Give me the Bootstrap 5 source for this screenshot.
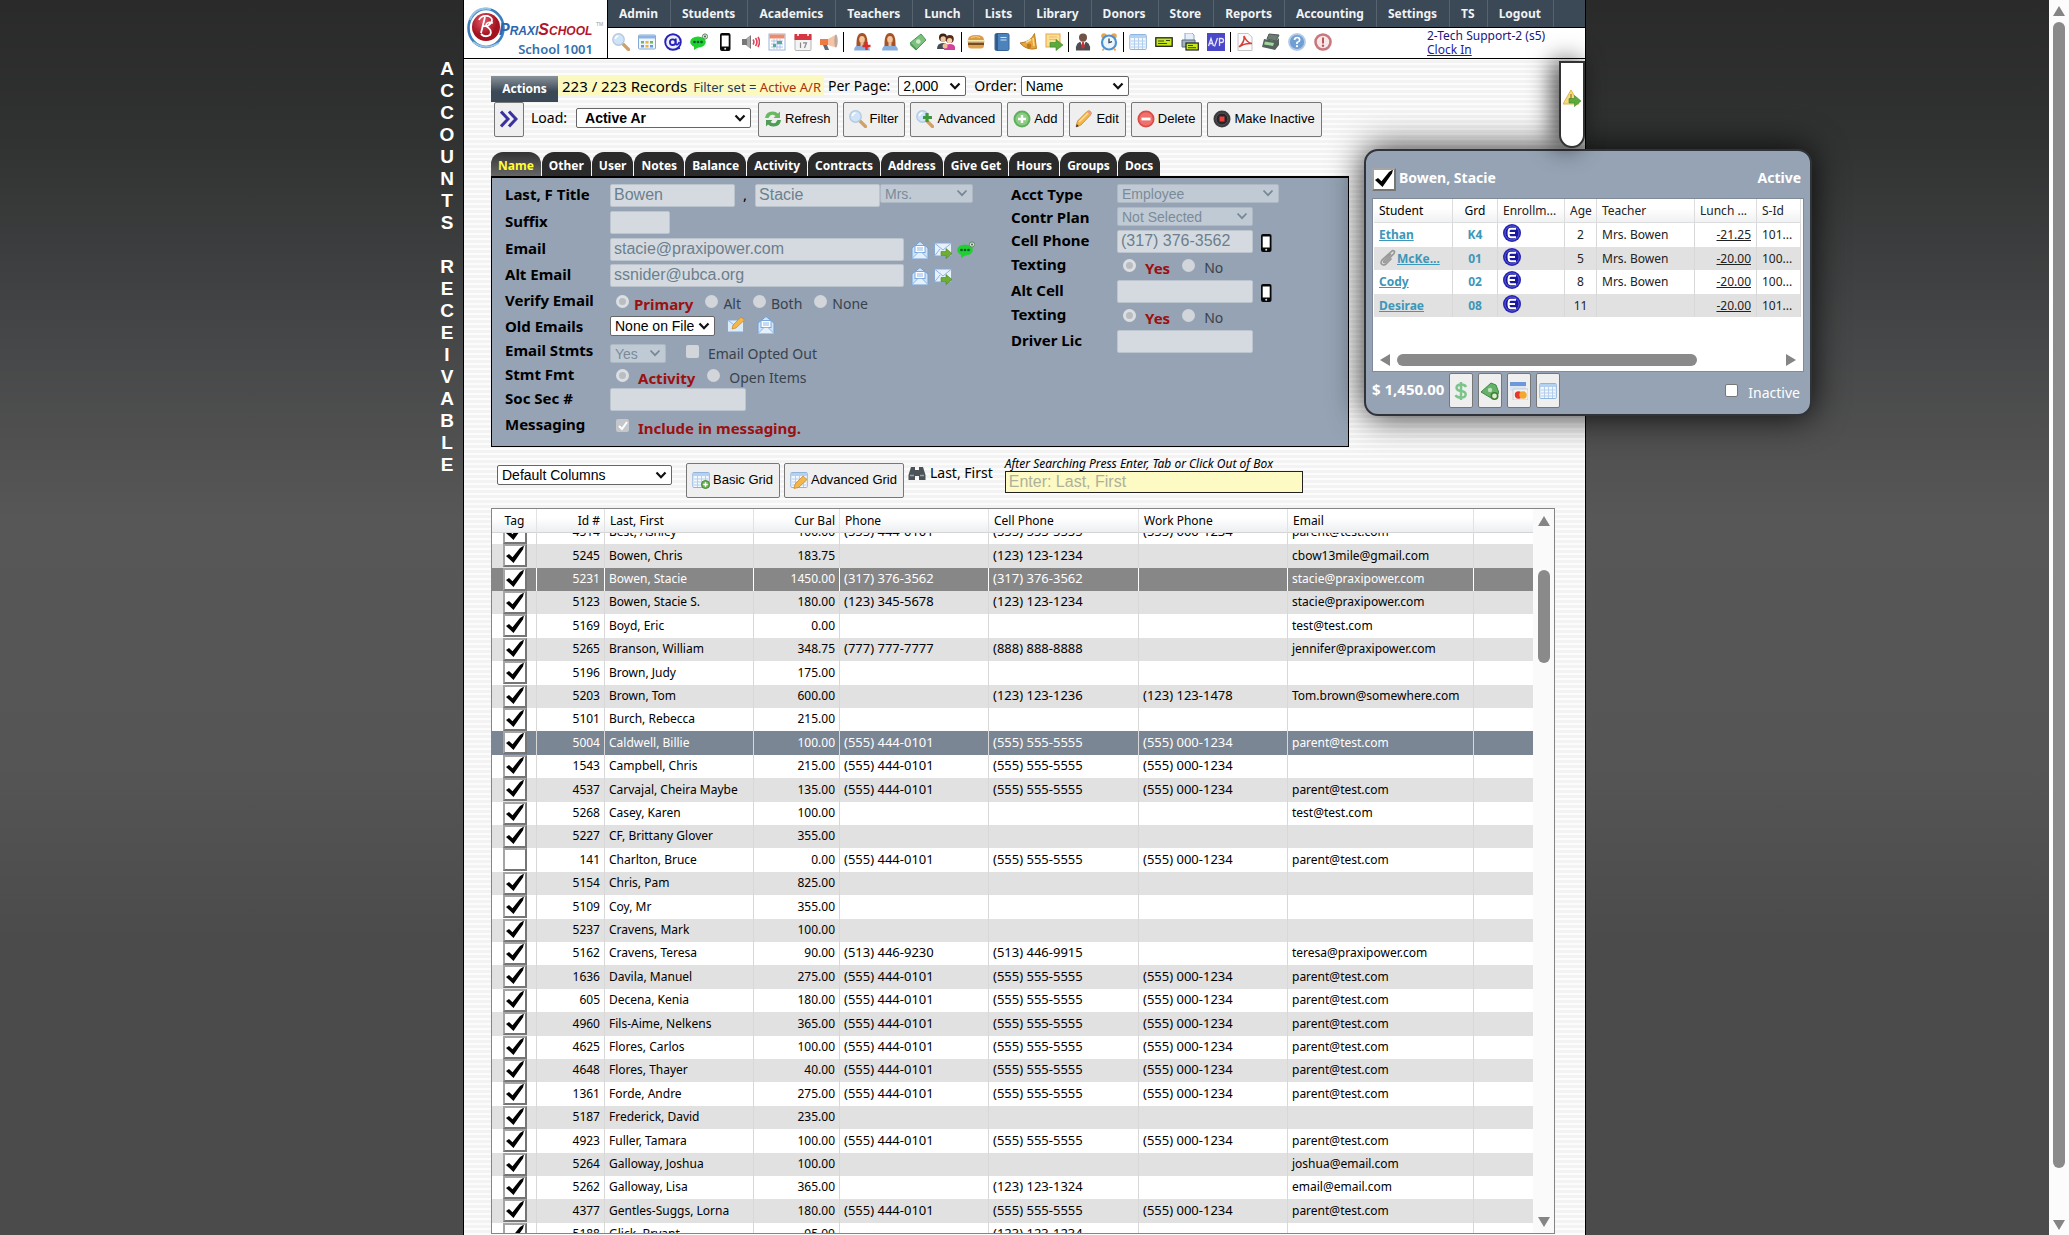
<!DOCTYPE html>
<html lang="en">
<head>
<meta charset="utf-8">
<title>PraxiSchool - Accounts Receivable</title>
<meta name="viewport" content="width=device-width, initial-scale=1">
<link rel="stylesheet" href="https://cdn.jsdelivr.net/npm/bootstrap@5.3.0/dist/css/bootstrap.min.css">
<style>
:root{--ui:"Noto Sans","Open Sans",sans-serif;--ctl:"Liberation Sans",Arial,sans-serif;--steel:#95a3b4}
body{font:12px/16px var(--ui);color:#000;background:linear-gradient(#2a2a2a 0,#303131 11%,#454647 27%,#575757 42%,#555 62%,#4b4b4b 76%,#4b4b4b 100%)}
svg.ic{width:18px;height:18px;flex:none;display:block}
.side{flex:1 1 0}
.side-title{color:#fff;font:bold 19px/22px var(--ctl);padding:58px 8px 0 0}
.side-title span{height:22px;width:16px;text-align:center;display:block}
.sheet{flex:0 1 1123px;min-width:0;border:1px solid #000;border-width:0 1px;background:repeating-linear-gradient(#f3f3f3 0 3px,#fcfcfc 3px 5px)}
/* header */
.head{height:60px;background:#fff;border-bottom:1px solid #000}
.logo{width:144px;border-right:1px solid #000;flex:none}
.school{font:600 13px/16px var(--ui);color:#3470ae;right:14px;top:41px}
.menu{height:28px;background:#3b4855;border-bottom:1px solid #000}
.menu a{font-weight:700;line-height:27px;color:#f0f2f4;text-decoration:none;padding:0 12px 0 11px;border-right:1px solid #56636f}
.tools{padding-bottom:2px}
.tools .bar{width:1px;height:20px;background:#000;margin:0 1px}
.tools .bar:nth-of-type(1){margin-right:4px}
.tools button{border:0;background:none;padding:0 4px}
.tools .wide button{padding:0 5px}
.user{color:#17177c;line-height:14px;width:158px;flex:none}
.user a{color:#1a1aa6;text-decoration:underline}
/* content */
.content{padding:17px 30px 1px 27px;min-height:0}
.actions{width:67px;height:26px;border:0;color:#fff;font-weight:700;background:linear-gradient(#8a939b,#3b4855 60%);flex:none;padding:0}
.found{background:#fbf8c0;height:20px;line-height:20px;padding:0 3px 0 4px}
.found b{font-weight:400;font-size:15px}
.found span{color:#1b3f63;font-size:13px;margin-left:6px}
.found em{font-style:normal;color:#a8330c}
.t14{font-size:14px;line-height:20px}
.t15{font-size:15px;line-height:20px}
.pick{appearance:none;border:1px solid #666;border-radius:2px;height:20px;font:14px/18px var(--ctl);color:#000;padding:0 20px 0 4px;
 background:#fff url("data:image/svg+xml,%3Csvg xmlns='http://www.w3.org/2000/svg' width='12' height='8'%3E%3Cpath d='M1.5 1.5 6 6.2l4.500-4.700' fill='none' stroke='%23111' stroke-width='2.200'/%3E%3C/svg%3E") no-repeat right 4px center}
.pick:disabled{opacity:1;height:19px;color:#7b8a99;border-color:#aeb9c4;background-color:#c0cad4;
 background-image:url("data:image/svg+xml,%3Csvg xmlns='http://www.w3.org/2000/svg' width='12' height='8'%3E%3Cpath d='M1.5 1.5 6 6.2l4.500-4.700' fill='none' stroke='%23788796' stroke-width='1.800'/%3E%3C/svg%3E")}
.act{height:35px;border:1px solid #777;border-radius:2px;background:#efefef;font:13px/16px var(--ctl);color:#000;padding:0 6px 0 5px;display:flex;align-items:center;gap:3px;white-space:nowrap}
.act:hover{background:#e4e4e4}
.w30{width:30px;justify-content:center}
.w24{width:24px;justify-content:center;padding:0}
.cmds{gap:5px;padding-left:3px}
.loadset{gap:9px;padding:0 2px 2px}
/* tabs */
.tabs{margin-top:15px}
.tabs a{height:24px;line-height:27px;padding:0 7px;font-weight:700;color:#fff;text-decoration:none;background:#2b2b2b;border-radius:12px 12px 0 0;margin-right:1px}
.tabs a.on{color:#ff3;background:linear-gradient(#333,#666)}
.panel{background:var(--steel);border:1px solid #000;border-top-width:2px;width:858px;height:271px;padding:6px 13px}
.colL{width:506px}
.ln{display:flex;height:26px;align-items:flex-start}
.ln.s24{height:24px}.ln.s23{height:23px}.ln.s27{height:27px}
.ln>.nm{width:105px;font-size:15px;font-weight:700;line-height:20px;flex:none}
.colR .ln>.nm{width:106px}
.box{appearance:none;border:1px solid #bcc5ce;border-radius:2px;background:#d5dae0;height:23px;font:16px/21px var(--ctl);color:#6b7f8d;padding:0 3px}
.w60{width:60px}.w125{width:125px}.w136{width:136px}.w294{width:294px}.w93{width:93px}.w105{width:105px}.w56{width:56px}.w162{width:162px}.w175{width:175px}.w108{width:108px}.w68{width:68px}
.mails{display:flex;gap:5px;padding:3px 0 0 7px}
.opt{display:flex;font-size:14px;line-height:20px;color:#39424c}
.opt input{appearance:none;width:13px;height:13px;border-radius:50%;background:#d2d5d9;margin:5px 5px 0 0;flex:none}
.opt input[type=radio]:checked{border:3px solid #dcdfe2;background:#b9bcc1}
.opt input[type=checkbox]{border-radius:2px}
.opt input[type=checkbox]:checked{background:#c3c7cb url("data:image/svg+xml,%3Csvg xmlns='http://www.w3.org/2000/svg' width='13' height='13'%3E%3Cpath d='M3 7l3 3 5-7' fill='none' stroke='%23fff' stroke-width='2'/%3E%3C/svg%3E")}
.opt label{padding-top:4px}
.opt .hot{color:#9c1010;font-weight:700;font-size:15px}
.opts{display:flex;padding-left:6px;gap:12px}
.opt.far input{margin-right:9px}
.finder{margin-top:8px;padding-left:6px}
.finder .act,.finder label{margin-top:8px}
.finder .pick{margin:10px 14px 0 0}
.hint{font-style:italic;line-height:15px;padding-top:1px}
.seek{appearance:none;width:298px;height:22px;border:1px solid #222;background:#fdfac4;font:16px/20px var(--ctl);padding:0 3px;display:block}
.seek::placeholder{color:#aeb09c;opacity:1}
/* grid */
.gridbox{border:1px solid #858585;background:#fff;margin-top:10px;min-height:0}
.view{overflow:hidden;min-height:0;min-width:0}
.recs{width:100%;table-layout:fixed;border-collapse:separate;border-spacing:0;white-space:nowrap}
.recs th{position:sticky;top:0;z-index:1;height:24px;font-weight:400;padding:2px 5px 0;background:linear-gradient(#fff 40%,#eceef0);border-bottom:1px solid #d4d4d4;border-right:1px solid #e2e2e2}
.recs td{height:23px;padding:0 5px 0 4px;line-height:20px;border-right:1px solid #d8d8d8;overflow:hidden}
.recs .tall td{height:24px}
.recs td:last-child,.recs th:last-child{border-right:0}
.recs tbody tr:nth-child(even) td{background:#e1e1e1}
.recs tbody tr.cur td{background:#878787;color:#fff;border-color:#fff}
.recs tbody tr.over td{background:#7b8694;color:#fff}
.recs .num{text-align:right;padding-right:4px}
.recs .tel{font-size:13px;padding-bottom:2px}
.recs .tick{text-align:center;padding-left:1px;padding-right:0}
.tag{appearance:none;display:block;width:24px;height:23px;margin:0 auto;border:2px solid;border-color:#a5a5a5 #757575 #757575 #a5a5a5;background:#fff}
.tag:checked{background:#fff url("data:image/svg+xml,%3Csvg xmlns='http://www.w3.org/2000/svg' viewBox='0 0 20 19'%3E%3Cpath d='M1 10l3-2 3.500 3.200L15 2l4-2.500-1 4L8.500 17z'/%3E%3C/svg%3E") center/100% 100%}
.vbar{width:21px;background:#fafafa;flex:none;padding:7px 0 6px}
.vbar .thumb{height:93px;margin:44px 0 auto}
.arr{width:0;height:0;border:6px solid transparent}
.arr.up{border-top:0;border-bottom:10px solid #858585}
.arr.dn{border-bottom:0;border-top:10px solid #858585}
.arr.lt{border-left:0;border-right:10px solid #858585}
.arr.rt{border-right:0;border-left:10px solid #858585}
.thumb{background:#8a8a8a;border-radius:6px;width:12px}
.pagebar{width:20px;background:#fcfcfc;flex:none;padding:6px 0 5px}
.pagebar .thumb{margin:6px 0 52px}
/* overlays */
.pull{right:0;top:61px;width:26px;height:87px;background:#fff;border:2px solid #333;border-radius:0 0 13px 13px;box-shadow:-6px 0 24px rgba(0,0,0,.75);padding:0 0 14px 2px;z-index:3}
.cardx{left:900px;top:149px;width:448px;height:267px;background:var(--steel);border:2px solid #303337;border-radius:14px;box-shadow:0 0 34px rgba(0,0,0,.85);padding:0 6px;z-index:2;color:#fff}
.cardx .top{height:47px;padding:17px 3px 0 0;font-size:14px;font-weight:700;line-height:20px;gap:3px}
.cardx .foot{gap:5px;padding-top:1px}
.kids{background:#fff;height:174px;border:1px solid #7f8b98;padding:0 2px 0 1px;color:#222}
.kids table{width:100%;table-layout:fixed;border-collapse:separate;border-spacing:0;white-space:nowrap}
.kids th{height:24px;font-weight:400;padding:0 5px;border-right:1px solid #ddd;border-bottom:1px solid #ddd;background:linear-gradient(#fff 40%,#f0f1f2)}
.kids td{height:23px;padding:0 5px;border-right:1px solid #d8d8d8;line-height:20px;overflow:hidden}
.kids .tall td{height:24px}
.kids tr:nth-child(even) td{background:#e1e1e1}
.kids a{color:#3c97b8;font-weight:700;text-decoration:underline}
.kids .grd{color:#3c97b8;font-weight:700;text-align:center}
.kids .lun{text-align:right;text-decoration:underline}
.kids td>svg{margin-bottom:4px}
.kids .hbar{margin-top:37px;padding:0 5px 0 6px}
.hbar .thumb{height:12px;width:300px;margin:0 auto 0 7px}
.chk0{appearance:none;width:13px;height:13px;background:#fff;border:1px solid #777;border-radius:2px;margin:0 10px 0 0}
</style>
</head>
<body class="vh-100 overflow-hidden d-flex">
<svg width="0" height="0" class="position-absolute" aria-hidden="true">
<symbol id="mag" viewBox="0 0 18 18"><path d="M10.500 10.500l6 6" stroke="#cfa06a" stroke-width="3.200" stroke-linecap="round"/><circle cx="6.500" cy="6.500" r="5.700" fill="#cfe4f8" stroke="#b3cae2" stroke-width="1.400"/><path d="M3.500 6a3 3 0 013-3" stroke="#fff" stroke-width="1.500" fill="none"/></symbol>
<symbol id="cal4" viewBox="0 0 18 18"><rect x=".5" y="2" width="17" height="14" rx="1" fill="#eef5fc" stroke="#86a9d4"/><path d="M1 2.500h16v3H1z" fill="#8db4e2"/><path d="M3 8h3v2.500H3zM12 8h3v2.500h-3z" fill="#79b366"/><path d="M7.500 8h3v2.500h-3zM7.500 12h3v2.500h-3z" fill="#f0b040"/><path d="M3 12h3v2.500H3zM12 12h3v2.500h-3z" fill="#6a9bd8"/></symbol>
<symbol id="at" viewBox="0 0 18 18"><circle cx="9" cy="9" r="7.800" fill="#eef" stroke="#2624b8" stroke-width="1.900"/><circle cx="8.700" cy="9.200" r="2.800" fill="none" stroke="#2624b8" stroke-width="1.800"/><path d="M11.800 5.500v5c0 2 3 1.500 3.500-1.500M12 16l4-1" fill="none" stroke="#2624b8" stroke-width="1.700"/></symbol>
<symbol id="sms" viewBox="0 0 18 18"><ellipse cx="8" cy="9" rx="7.800" ry="5.500" fill="#1fd02f"/><path d="M4 13l0 4 5-3z" fill="#1fd02f"/><g fill="#053"><circle cx="4.500" cy="9" r="1.300"/><circle cx="8" cy="9" r="1.300"/><circle cx="11.500" cy="9" r="1.300"/></g><circle cx="15" cy="3.500" r="2.600" fill="#dfeadf" stroke="#5a8a5a"/><circle cx="15" cy="3.500" r=".9" fill="#444"/></symbol>
<symbol id="cell" viewBox="0 0 18 18"><rect x="4" y="0" width="10.500" height="18" rx="2" fill="#080808"/><path d="M5.700 2.500h7v11h-7z" fill="#fff"/><circle cx="9.200" cy="15.800" r="1" fill="#ddd"/></symbol>
<symbol id="spk" viewBox="0 0 18 18"><path d="M0 6h4l5-4v14l-5-4H0z" fill="#777"/><path d="M5 5l3-2v12l-3-2z" fill="#aaa"/><path d="M11 6.500q1.800 2.500 0 5M13.500 5q3 4 0 8M16 4q3 5 0 10" stroke="#e2425a" stroke-width="1.600" fill="none"/></symbol>
<symbol id="calr" viewBox="0 0 18 18"><rect x="1" y="1" width="16" height="16" fill="#fff" stroke="#9ab6dc"/><path d="M1.500 1.500h15v4h-15z" fill="#f08a68"/><path d="M3 8h12M3 11h12M3 14h12M6 6v10M9 6v10M12 6v10" stroke="#a9c4e6"/><path d="M9 8h5v3h-5zM5 11h3v3H5z" fill="#5fa79a"/></symbol>
<symbol id="cal17" viewBox="0 0 18 18"><rect x="1" y="1.500" width="16" height="16" rx="1" fill="#f4f4f4" stroke="#b5b5b5"/><path d="M.5 1h17v6H.5z" fill="#d63642"/><path d="M4 0v3M14 0v3" stroke="#fff" stroke-width="1.500"/><path d="M6.500 9.500V15M9 9.800h3.500L10.500 15" stroke="#888" stroke-width="1.200" fill="none"/></symbol>
<symbol id="horn" viewBox="0 0 18 18"><path d="M0 6l9 0v6H0z" fill="#ee7a44"/><path d="M8 6l8-4.500v13L8 12z" fill="#f6c3a4"/><ellipse cx="16" cy="8" rx="1.700" ry="6.500" fill="#b9a9a0"/><path d="M3 12h4l2 5H5z" fill="#5b6f85"/></symbol>
<symbol id="wom" viewBox="0 0 18 18"><path d="M1 17.500q0-6 8-6t8 6z" fill="#88aede"/><path d="M3.500 13Q3 0 9 0t5.500 13z" fill="#a3532a"/><ellipse cx="9" cy="6.500" rx="2.800" ry="3.600" fill="#f3c69c"/><path d="M7.500 10h3v3h-3z" fill="#eebc90"/></symbol>
<symbol id="womp" viewBox="0 0 18 18"><use href="#wom"/><path d="M13.500 9v8M9.500 13h8" stroke="#e02a28" stroke-width="2.400"/></symbol>
<symbol id="cash" viewBox="0 0 18 18"><path d="M1 10L12 1l5 6L7 17z" fill="#7cc07e" stroke="#4e9a55"/><path d="M1 12l1-2 6 6-1 1.500z" fill="#4e9a55"/><circle cx="9.300" cy="8.500" r="2.300" fill="#cfeacb"/></symbol>
<symbol id="ppl" viewBox="0 0 18 18"><circle cx="6" cy="4.500" r="4" fill="#3b2416"/><circle cx="6.200" cy="6" r="2.700" fill="#f1c59d"/><path d="M0 16q0-6 6-6t5 6z" fill="#454b57"/><circle cx="12.800" cy="6" r="4" fill="#5a2c17"/><circle cx="12.600" cy="7.500" r="2.600" fill="#f6cfac"/><path d="M7 17q0-6 6-6t5 6z" fill="#d5409c"/><circle cx="8" cy="13" r="2.500" fill="#efbd92"/></symbol>
<symbol id="bun" viewBox="0 0 18 18"><path d="M1 7q0-5 8-5t8 5z" fill="#dd9a42"/><path d="M.5 7.500h17v2H.5z" fill="#e7cf56"/><path d="M1 9.500h16v3H1z" fill="#7a4b1f"/><path d="M1 12.500h16q0 3-3 3H4q-3 0-3-3z" fill="#dfa24e"/><path d="M4 4.500q5-2 9 0" stroke="#f3cf8e" fill="none"/></symbol>
<symbol id="book" viewBox="0 0 18 18"><rect x="2" y=".5" width="14" height="17" rx="1.500" fill="#4c83bd" stroke="#366494"/><path d="M2.500 1h2.500v16H2.500z" fill="#2e5b8b"/><path d="M7.500 4.500h6M7.500 7h6" stroke="#d4e4f4"/></symbol>
<symbol id="bell" viewBox="0 0 18 18"><path d="M15.500 .5L17.500 15.500Q8 18 1 10q11-1 14.500-9.500z" fill="#e6a63a" stroke="#b97b21"/><circle cx="10" cy="13" r="2.400" fill="#c07d20"/><path d="M14 5l1 8M7 9.500l5-3" stroke="#f8dc92" stroke-width="1.500"/></symbol>
<symbol id="note" viewBox="0 0 18 18"><rect x="1" y="1" width="14" height="13" fill="#fbe091" stroke="#e6a54c"/><path d="M4 4h8M4 6.500h8" stroke="#f2b77c"/><path d="M5 9.500h6V6.500l7 5.500-7 5.500v-3.500H5z" fill="#5aab3c" stroke="#3c8426" stroke-width=".6"/></symbol>
<symbol id="man" viewBox="0 0 18 18"><path d="M2 17.500q-1-9 7-9t7 9z" fill="#4d4d52"/><circle cx="9" cy="4.500" r="4" fill="#705246"/><path d="M6.500 9h5l-2.500 6z" fill="#fff"/><path d="M8.200 9h1.600l1 5-1.800 2-1.800-2z" fill="#cf2e38"/></symbol>
<symbol id="clk" viewBox="0 0 18 18"><circle cx="4" cy="3" r="2.800" fill="#e9a74c"/><circle cx="14" cy="3" r="2.800" fill="#e9a74c"/><circle cx="9" cy="9.500" r="7" fill="#eef6fd" stroke="#4d93d3" stroke-width="2.200"/><path d="M9 5.500v4.200l3-1" stroke="#345" stroke-width="1.300" fill="none"/><path d="M4 15.500l-1.500 2M14 15.500l1.500 2" stroke="#e9a74c" stroke-width="1.800"/></symbol>
<symbol id="tbl" viewBox="0 0 18 18"><rect x=".8" y="1.500" width="16.500" height="15" rx="1" fill="#f2f8fe" stroke="#8fb5de"/><path d="M1 2h16v3H1z" fill="#b4d1f0"/><path d="M2 8h14M2 11h14M2 14h14M5.500 5v11M9.500 5v11M13.500 5v11" stroke="#b3cfec"/></symbol>
<symbol id="lime" viewBox="0 0 18 18"><rect x=".8" y="4.800" width="16.400" height="8.500" fill="#c4e81c" stroke="#222" stroke-width="1.300"/><path d="M3 8h6M3 10.500h9M11 7.500h4" stroke="#3c4a10" stroke-width="1.200"/></symbol>
<symbol id="lime2" viewBox="0 0 18 18"><path d="M4 0h7l2 2v6H4z" fill="#e7effa" stroke="#8fa9c9"/><path d="M1 7h13v7H1z" fill="#9fb2bf" stroke="#5d6d7a"/><rect x="5" y="10" width="12.300" height="7" fill="#c4e81c" stroke="#222" stroke-width="1.200"/><path d="M7 12.500h5M7 14.700h8" stroke="#3c4a10"/></symbol>
<symbol id="ap" viewBox="0 0 18 18"><rect width="18" height="18" fill="#4a48c8"/><path d="M1.500 13L4 5.500 6.500 13M2.500 10.500h3M7.500 13.500l3-8.500M12.500 13V5.500h2q2 0 2 2t-2 2h-2" stroke="#e4e4fa" stroke-width="1.300" fill="none"/></symbol>
<symbol id="pdf" viewBox="0 0 18 18"><path d="M2 .5h10L16 4v13.500H2z" fill="#fbfbfb" stroke="#c4c4c4"/><path d="M3 14Q9 9 8 3q3 7 8 7.500Q8 10 3 14z" fill="none" stroke="#d43f3a" stroke-width="1.500"/></symbol>
<symbol id="reg" viewBox="0 0 18 18"><path d="M7 1l10 1-3 6-9-2z" fill="#6d7c75" stroke="#4c5853"/><path d="M2 6l12 2 3-3v7l-4 5L0 14z" fill="#56625c"/><path d="M3 8.500l9 1.500-1 3-9-1.500z" fill="#9dd79a"/></symbol>
<symbol id="help" viewBox="0 0 18 18"><circle cx="9" cy="9" r="8" fill="#6f9fd4" stroke="#b5cbe4" stroke-width="1.800"/><path d="M6.500 7q.2-2.500 2.700-2.500T11.700 7Q11.700 8.500 9 9.500v1.500" stroke="#fff" stroke-width="1.700" fill="none"/><circle cx="9" cy="13.200" r="1.100" fill="#fff"/></symbol>
<symbol id="err" viewBox="0 0 18 18"><circle cx="9" cy="9" r="7.500" fill="#f7e7e8" stroke="#c8777d" stroke-width="2.600"/><path d="M9 4.500v6" stroke="#b9565e" stroke-width="2"/><circle cx="9" cy="12.800" r="1.200" fill="#b9565e"/></symbol>
<symbol id="dbl" viewBox="0 0 18 18"><path d="M1 1.500l7 7.500-7 7.500M9 1.500l7 7.500-7 7.500" fill="none" stroke="#3a32a0" stroke-width="3"/></symbol>
<symbol id="ref" viewBox="0 0 18 18"><path d="M1 8Q2 1 9 1.500q3 0 5 2L16 1.500v6.500h-6.500L11.500 6Q7 2.500 4.500 8z" fill="#6cb862"/><path d="M17 10q-1 7-8 6.500-3 0-5-2L2 16.500V10h6.500L6.500 12q4.500 3.500 7-2z" fill="#4e9d55"/></symbol>
<symbol id="magp" viewBox="0 0 18 18"><use href="#mag"/><path d="M11 3v9M7 7.500h9" stroke="#3f9a3d" stroke-width="3.200"/></symbol>
<symbol id="add" viewBox="0 0 18 18"><circle cx="9" cy="9" r="8.500" fill="#5fb05c"/><circle cx="9" cy="9" r="6.500" fill="#8ccb84"/><path d="M9 5v8M5 9h8" stroke="#fff" stroke-width="2.400"/></symbol>
<symbol id="pen" viewBox="0 0 18 18"><path d="M1 17l1.500-6L12 1.500q2-1.500 3.500 0t0 3.500L6 15z" fill="#f3b64a" stroke="#c78528" stroke-width=".8"/><path d="M4 12L13 3" stroke="#fde0a0" stroke-width="1.500"/><path d="M12 1.500l4 4 .5-3-2-2z" fill="#e59a86"/><path d="M1 17l.8-3 2 2.200z" fill="#333"/></symbol>
<symbol id="del" viewBox="0 0 18 18"><circle cx="9" cy="9" r="8.500" fill="#dc4a46"/><circle cx="9" cy="9" r="6.800" fill="#ee716b"/><path d="M4.500 9h9" stroke="#fff" stroke-width="2.800"/></symbol>
<symbol id="stop" viewBox="0 0 18 18"><circle cx="9" cy="9" r="8.500" fill="#3b3b3e"/><circle cx="9" cy="9" r="6" fill="#26262a" stroke="#55555a"/><path d="M6.500 6.500h5v5h-5z" fill="#ee4038"/></symbol>
<symbol id="warn" viewBox="0 0 18 18"><path d="M8 1l8 14H0z" fill="#f6dc80" stroke="#dfb548"/><path d="M8 5v5" stroke="#a88a30" stroke-width="1.500"/><path d="M6 9.500h5.500V6.500L18 12l-6.500 5.500V14H6z" fill="#5aab3c" stroke="#3c8426" stroke-width=".6"/></symbol>
<symbol id="mail" viewBox="0 0 18 18"><path d="M1 7l8-6.500L17 7v10.500H1z" fill="#cfe3f8" stroke="#6f9fd6"/><rect x="4" y="4.500" width="10" height="7" fill="#fff" stroke="#79a8dc"/><path d="M6 7h6M6 9h6" stroke="#8db4e2"/><path d="M1 17.500l6-6h4l6 6" fill="#e4f0fc" stroke="#8db4e2"/></symbol>
<symbol id="mgo" viewBox="0 0 18 18"><path d="M.5 2h17v13H.5z" fill="#e6f1fc" stroke="#86a9d4"/><path d="M.5 2L9 9l8.500-7M.5 15L6 8M17.500 15L12 8" fill="none" stroke="#8fb4de"/><path d="M7 10.500h5V7.500l6 5-6 5V14.500H7z" fill="#6fae35" stroke="#4a8422" stroke-width=".6"/></symbol>
<symbol id="mpen" viewBox="0 0 18 18"><path d="M.5 4h16v12H.5z" fill="#dcebfa" stroke="#86a9d4"/><path d="M.5 4l8 6 8-6" fill="none" stroke="#8fb4de"/><path d="M5 13l1-4 8-8 3.500 3-8.500 8z" fill="#f3b64a" stroke="#c78528" stroke-width=".7"/></symbol>
<symbol id="tadd" viewBox="0 0 18 18"><use href="#tbl"/><circle cx="13.500" cy="13.500" r="4" fill="#6fb556" stroke="#47843a"/><path d="M13.500 11.300v4.400M11.300 13.500h4.400" stroke="#fff" stroke-width="1.400"/></symbol>
<symbol id="tpen" viewBox="0 0 18 18"><use href="#tbl"/><path d="M4 17.500l1-4.500 8-8 4 3.500-8.500 8z" fill="#f3b64a" stroke="#c78528" stroke-width=".7"/></symbol>
<symbol id="bino" viewBox="0 0 18 18"><path d="M3 3h4v3h4V3h4l2.500 8v5h-6.500v-4H7v4H.5v-5z" fill="#4b5258"/><path d="M2 11.500h4M12 11.500h4" stroke="#98a2aa" stroke-width="1.500"/></symbol>
<symbol id="dol" viewBox="0 0 18 18"><path d="M14 5q-1-2.500-5-2.500T4.500 5.500Q4.500 8.500 9 9t4.700 3.500Q13.500 15.500 9 15.500T3.700 13M9 0v18" fill="none" stroke="#7cc58a" stroke-width="2.500"/></symbol>
<symbol id="cadd" viewBox="0 0 18 18"><path d="M0 10L10 1l5 2 3 8-8 5z" fill="#66b169" stroke="#43884a"/><circle cx="9" cy="8" r="2.200" fill="#bfe3bb"/><circle cx="13.500" cy="14" r="3.200" fill="#d9eed2" stroke="#3f7f2f" stroke-width="1.600"/></symbol>
<symbol id="card1" viewBox="0 0 18 18"><path d="M0 0h16v9H0z" fill="#dbe6f5"/><path d="M0 0h16v4H0z" fill="#6f98d8"/><path d="M3 7h15v11H3z" fill="#f1f1ee" stroke="#bbb" stroke-width=".6"/><circle cx="8.500" cy="13" r="3.700" fill="#e2382e"/><circle cx="13" cy="13" r="3.700" fill="#f3a72e"/></symbol>
<symbol id="enr" viewBox="0 0 18 18"><circle cx="9" cy="9" r="9" fill="#2422b4"/><circle cx="9" cy="9" r="7" fill="#1a18a0" stroke="#6e6edc" stroke-width=".8"/><path d="M13 4.800H7.500Q5.500 4.800 5.500 9t2 4.200H13M5.500 9h6.500" fill="none" stroke="#fff" stroke-width="2"/></symbol>
<symbol id="clip" viewBox="0 0 18 18"><path d="M12 5l-7 7q-1 2 1 1.500l9-9q1.500-3-1.500-3L3 11q-2.500 4 1.500 5l2-.5 6-6" fill="none" stroke="#999" stroke-width="1.700"/></symbol>
</svg>

<div class="flex-grow-1 d-flex position-relative h-100">
  <aside class="side d-flex justify-content-end">
    <div class="side-title" aria-label="Accounts Receivable"><span>A</span><span>C</span><span>C</span><span>O</span><span>U</span><span>N</span><span>T</span><span>S</span><span></span><span>R</span><span>E</span><span>C</span><span>E</span><span>I</span><span>V</span><span>A</span><span>B</span><span>L</span><span>E</span></div>
  </aside>

  <main class="sheet d-flex flex-column position-relative h-100">
    <header class="head d-flex">
      <div class="logo position-relative">
        <svg width="142" height="56" viewBox="0 0 142 56" class="d-block" role="img" aria-label="PraxiSchool">
          <defs><radialGradient id="rg" cx=".4" cy=".3"><stop offset="0" stop-color="#e2596a"/><stop offset="1" stop-color="#a3121f"/></radialGradient></defs>
          <ellipse cx="22" cy="28" rx="17.500" ry="19" fill="none" stroke="#3b7fbf" stroke-width="2.600"/>
          <path d="M6 20Q11 6 27 9M9 42q12 9 26 1" fill="none" stroke="#9cc4e6" stroke-width="2"/>
          <circle cx="22" cy="27" r="14" fill="url(#rg)"/>
          <path d="M15 20q2-5 9-4 6 2 3 7-3 4-8 3M21 17l-4 16M29 23q-7-2-7 3 7 4 4 9-5 3-9-1" fill="none" stroke="#fff" stroke-width="1.800"/>
          <text x="35" y="35" font-family="Liberation Sans" font-weight="bold" font-style="italic" font-size="16" fill="#2a65b0">P<tspan font-size="12">RAXI</tspan><tspan fill="#b5152c">S</tspan><tspan font-size="12" fill="#b5152c">CHOOL</tspan></text>
          <text x="132" y="26" font-family="Liberation Sans" font-size="5" fill="#999">TM</text>
        </svg>
        <div class="school position-absolute">School 1001</div>
      </div>
      <div class="flex-grow-1 d-flex flex-column">
        <nav class="menu d-flex"><a href="#">Admin</a><a href="#">Students</a><a href="#">Academics</a><a href="#">Teachers</a><a href="#">Lunch</a><a href="#">Lists</a><a href="#">Library</a><a href="#">Donors</a><a href="#">Store</a><a href="#">Reports</a><a href="#">Accounting</a><a href="#">Settings</a><a href="#">TS</a><a href="#">Logout</a></nav>
        <div class="d-flex justify-content-between align-items-center flex-grow-1">
          <div class="tools d-flex align-items-center" id="tools"></div>
          <div class="user">2-Tech Support-2 (s5)<br><a href="#">Clock In</a></div>
        </div>
      </div>
    </header>

    <div class="content d-flex flex-column flex-grow-1">
      <div class="d-flex align-items-start">
        <button class="actions">Actions</button>
        <div class="found"><b>223 / 223 Records</b><span>Filter set = <em>Active A/R</em></span></div>
        <label for="pp" class="t14 ms-1 me-2">Per Page:</label>
        <select id="pp" class="pick w68"><option>2,000</option></select>
        <label for="ord" class="t14 ms-2 me-1">Order:</label>
        <select id="ord" class="pick w108"><option>Name</option></select>
      </div>
      <div class="cmds d-flex">
        <button class="act w30" aria-label="More"><svg class="ic"><use href="#dbl"/></svg></button>
        <div class="loadset d-flex align-items-center"><label for="ld" class="t14">Load:</label>
        <select id="ld" class="pick w175 fw-bold ps-2"><option>Active Ar</option></select></div>
        <button class="act"><svg class="ic"><use href="#ref"/></svg>Refresh</button>
        <button class="act"><svg class="ic"><use href="#mag"/></svg>Filter</button>
        <button class="act"><svg class="ic"><use href="#magp"/></svg>Advanced</button>
        <button class="act"><svg class="ic"><use href="#add"/></svg>Add</button>
        <button class="act"><svg class="ic"><use href="#pen"/></svg>Edit</button>
        <button class="act"><svg class="ic"><use href="#del"/></svg>Delete</button>
        <button class="act"><svg class="ic"><use href="#stop"/></svg>Make Inactive</button>
      </div>

      <nav class="tabs d-flex"><a href="#" class="on">Name</a><a href="#">Other</a><a href="#">User</a><a href="#">Notes</a><a href="#">Balance</a><a href="#">Activity</a><a href="#">Contracts</a><a href="#">Address</a><a href="#">Give Get</a><a href="#">Hours</a><a href="#">Groups</a><a href="#">Docs</a></nav>
      <form class="panel d-flex">
        <div class="colL">
          <div class="ln s27"><label class="nm" for="ln">Last, F Title</label><input id="ln" class="box w125" value="Bowen" disabled><span class="t15 px-2">,</span><input aria-label="First name" class="box w125" value="Stacie" disabled><select aria-label="Title" class="pick w93" disabled><option>Mrs.</option></select></div>
          <div class="ln s27"><label class="nm" for="sf">Suffix</label><input id="sf" class="box w60" disabled></div>
          <div class="ln"><label class="nm" for="em">Email</label><input id="em" class="box w294" value="stacie@praxipower.com" disabled><span class="mails"><svg class="ic"><use href="#mail"/></svg><svg class="ic"><use href="#mgo"/></svg><svg class="ic"><use href="#sms"/></svg></span></div>
          <div class="ln"><label class="nm" for="ae">Alt Email</label><input id="ae" class="box w294" value="ssnider@ubca.org" disabled><span class="mails"><svg class="ic"><use href="#mail"/></svg><svg class="ic"><use href="#mgo"/></svg></span></div>
          <div class="ln"><span class="nm">Verify Email</span><div class="opts"><span class="opt"><input type="radio" name="v" id="v1" checked disabled><label for="v1" class="hot">Primary</label></span><span class="opt"><input type="radio" name="v" id="v2" disabled><label for="v2">Alt</label></span><span class="opt"><input type="radio" name="v" id="v3" disabled><label for="v3">Both</label></span><span class="opt"><input type="radio" name="v" id="v4" disabled><label for="v4">None</label></span></div></div>
          <div class="ln s24"><label class="nm" for="oe">Old Emails</label><select id="oe" class="pick w105"><option>None on File</option></select><span class="d-flex ps-2 gap-2 ms-1"><svg class="ic"><use href="#mpen"/></svg><svg class="ic ms-1"><use href="#mail"/></svg></span></div>
          <div class="ln s24"><label class="nm" for="es">Email Stmts</label><select id="es" class="pick w56 mt-1" disabled><option>Yes</option></select><span class="opt far ps-3 ms-1"><input type="checkbox" id="oo" disabled><label for="oo">Email Opted Out</label></span></div>
          <div class="ln s24"><span class="nm">Stmt Fmt</span><div class="opts"><span class="opt far"><input type="radio" name="f" id="f1" checked disabled><label for="f1" class="hot">Activity</label></span><span class="opt far"><input type="radio" name="f" id="f2" disabled><label for="f2">Open Items</label></span></div></div>
          <div class="ln"><label class="nm" for="ss">Soc Sec #</label><input id="ss" class="box w136" disabled></div>
          <div class="ln"><span class="nm">Messaging</span><div class="opts"><span class="opt far"><input type="checkbox" id="ms" checked disabled><label for="ms" class="hot">Include in messaging.</label></span></div></div>
        </div>
        <div class="colR">
          <div class="ln s23"><label class="nm" for="at1">Acct Type</label><select id="at1" class="pick w162" disabled><option>Employee</option></select></div>
          <div class="ln s23"><label class="nm" for="cp">Contr Plan</label><select id="cp" class="pick w136" disabled><option>Not Selected</option></select></div>
          <div class="ln s24"><label class="nm" for="ce">Cell Phone</label><input id="ce" class="box w136" value="(317) 376-3562" disabled><svg class="ic ms-1 mt-1"><use href="#cell"/></svg></div>
          <div class="ln"><span class="nm">Texting</span><div class="opts"><span class="opt far"><input type="radio" name="t" id="t1" checked disabled><label for="t1" class="hot">Yes</label></span><span class="opt far"><input type="radio" name="t" id="t2" disabled><label for="t2">No</label></span></div></div>
          <div class="ln s24"><label class="nm" for="ac">Alt Cell</label><input id="ac" class="box w136" disabled><svg class="ic ms-1 mt-1"><use href="#cell"/></svg></div>
          <div class="ln"><span class="nm">Texting</span><div class="opts"><span class="opt far"><input type="radio" name="u" id="u1" checked disabled><label for="u1" class="hot">Yes</label></span><span class="opt far"><input type="radio" name="u" id="u2" disabled><label for="u2">No</label></span></div></div>
          <div class="ln"><label class="nm" for="dl">Driver Lic</label><input id="dl" class="box w136" disabled></div>
        </div>
      </form>

      <div class="finder d-flex align-items-start">
        <select aria-label="Columns" class="pick w175"><option>Default Columns</option></select>
        <button class="act"><svg class="ic"><use href="#tadd"/></svg>Basic Grid</button>
        <button class="act ms-1"><svg class="ic"><use href="#tpen"/></svg>Advanced Grid</button>
        <label for="sk" class="t14 d-flex align-items-center gap-1 ms-1 me-2"><svg class="ic"><use href="#bino"/></svg>Last, First</label>
        <div class="ms-1"><div class="hint">After Searching Press Enter, Tab or Click Out of Box</div><input id="sk" class="seek" placeholder="Enter: Last, First"></div>
      </div>

      <div class="gridbox d-flex flex-grow-1">
        <div class="view flex-grow-1" id="view">
          <table class="recs">
            <colgroup><col style="width:45px"><col style="width:68px"><col style="width:149px"><col style="width:86px"><col style="width:149px"><col style="width:150px"><col style="width:149px"><col style="width:186px"><col></colgroup>
            <thead><tr><th class="tick">Tag</th><th class="num">Id #</th><th>Last, First</th><th class="num">Cur Bal</th><th>Phone</th><th>Cell Phone</th><th>Work Phone</th><th>Email</th><th></th></tr></thead>
            <tbody id="rows"></tbody>
          </table>
        </div>
        <div class="vbar d-flex flex-column align-items-center"><span class="arr up"></span><div class="thumb"></div><span class="arr dn"></span></div>
      </div>
    </div>

    <button class="pull position-absolute" aria-label="Alerts"><svg class="ic"><use href="#warn"/></svg></button>

    <section class="cardx position-absolute">
      <div class="top d-flex"><input type="checkbox" class="tag m-0" checked aria-label="Tag Bowen, Stacie"><span>Bowen, Stacie</span><span class="ms-auto">Active</span></div>
      <div class="kids">
        <table>
          <colgroup><col style="width:79px"><col style="width:45px"><col style="width:67px"><col style="width:32px"><col style="width:98px"><col style="width:62px"><col></colgroup>
          <thead><tr><th class="text-black">Student</th><th class="text-center text-black">Grd</th><th>Enrollm...</th><th>Age</th><th>Teacher</th><th>Lunch ...</th><th>S-Id</th></tr></thead>
          <tbody>
            <tr class="tall"><td><a href="#">Ethan</a></td><td class="grd">K4</td><td><svg class="ic"><use href="#enr"/></svg></td><td class="text-center">2</td><td>Mrs. Bowen</td><td class="lun">-21.25</td><td>101...</td></tr>
            <tr><td><span class="d-flex"><svg class="ic"><use href="#clip"/></svg><a href="#">McKe...</a></span></td><td class="grd">01</td><td><svg class="ic"><use href="#enr"/></svg></td><td class="text-center">5</td><td>Mrs. Bowen</td><td class="lun">-20.00</td><td>100...</td></tr>
            <tr class="tall"><td><a href="#">Cody</a></td><td class="grd">02</td><td><svg class="ic"><use href="#enr"/></svg></td><td class="text-center">8</td><td>Mrs. Bowen</td><td class="lun">-20.00</td><td>100...</td></tr>
            <tr><td><a href="#">Desirae</a></td><td class="grd">08</td><td><svg class="ic"><use href="#enr"/></svg></td><td class="text-center">11</td><td></td><td class="lun">-20.00</td><td>101...</td></tr>
          </tbody>
        </table>
        <div class="hbar d-flex align-items-center"><span class="arr lt"></span><div class="thumb"></div><span class="arr rt"></span></div>
      </div>
      <div class="foot d-flex align-items-center">
        <b class="t15 pb-1">$ 1,450.00</b>
        <button class="act w24" aria-label="Payment"><svg class="ic"><use href="#dol"/></svg></button><button class="act w24" aria-label="Add charge"><svg class="ic"><use href="#cadd"/></svg></button><button class="act w24" aria-label="Card"><svg class="ic"><use href="#card1"/></svg></button><button class="act w24" aria-label="Ledger"><svg class="ic"><use href="#tbl"/></svg></button>
        <span class="ms-auto d-flex align-items-center t14 pe-1"><input type="checkbox" class="chk0" id="ina"><label for="ina" class="pt-1">Inactive</label></span>
      </div>
    </section>
  </main>
  <div class="side"></div>
</div>
<div class="pagebar d-flex flex-column align-items-center" aria-hidden="true"><span class="arr up"></span><div class="thumb flex-grow-1"></div><span class="arr dn"></span></div>

<script src="https://cdn.jsdelivr.net/npm/bootstrap@5.3.0/dist/js/bootstrap.bundle.min.js"></script>
<script>
// Toolbar groups, split by a divider
var groups=['mag cal4 at sms cell spk calr cal17 horn','womp wom cash ppl','bun book bell note','man clk','tbl lime lime2 ap','pdf reg help err'];
document.getElementById('tools').innerHTML=groups.map(function(g,i){
  return '<div class="d-flex'+(i==1?' wide':'')+'">'+g.split(' ').map(function(n){return '<button aria-label="'+n+'"><svg class="ic"><use href="#'+n+'"/></svg></button>'}).join('')+'</div>';
}).join('<span class="bar"></span>');

// Records: id | name | balance | phone | cell | work | email
var P='(555) 444-0101|(555) 555-5555|(555) 000-1234|parent@test.com';
var data=[
'4514|Best, Ashley|100.00|'+P,
'5245|Bowen, Chris|183.75||(123) 123-1234||cbow13mile@gmail.com',
'5231|Bowen, Stacie|1450.00|(317) 376-3562|(317) 376-3562||stacie@praxipower.com',
'5123|Bowen, Stacie S.|180.00|(123) 345-5678|(123) 123-1234||stacie@praxipower.com',
'5169|Boyd, Eric|0.00||||test@test.com',
'5265|Branson, William|348.75|(777) 777-7777|(888) 888-8888||jennifer@praxipower.com',
'5196|Brown, Judy|175.00||||',
'5203|Brown, Tom|600.00||(123) 123-1236|(123) 123-1478|Tom.brown@somewhere.com',
'5101|Burch, Rebecca|215.00||||',
'5004|Caldwell, Billie|100.00|'+P,
'1543|Campbell, Chris|215.00|(555) 444-0101|(555) 555-5555|(555) 000-1234|',
'4537|Carvajal, Cheira Maybe|135.00|'+P,
'5268|Casey, Karen|100.00||||test@test.com',
'5227|CF, Brittany Glover|355.00||||',
'141|Charlton, Bruce|0.00|'+P,
'5154|Chris, Pam|825.00||||',
'5109|Coy, Mr|355.00||||',
'5237|Cravens, Mark|100.00||||',
'5162|Cravens, Teresa|90.00|(513) 446-9230|(513) 446-9915||teresa@praxipower.com',
'1636|Davila, Manuel|275.00|'+P,
'605|Decena, Kenia|180.00|'+P,
'4960|Fils-Aime, Nelkens|365.00|'+P,
'4625|Flores, Carlos|100.00|'+P,
'4648|Flores, Thayer|40.00|'+P,
'1361|Forde, Andre|275.00|'+P,
'5187|Frederick, David|235.00||||',
'4923|Fuller, Tamara|100.00|'+P,
'5264|Galloway, Joshua|100.00||||joshua@email.com',
'5262|Galloway, Lisa|365.00||(123) 123-1324||email@email.com',
'4377|Gentles-Suggs, Lorna|180.00|'+P,
'5188|Glick, Bryant|95.00||(123) 123-1234||'];
document.getElementById('rows').innerHTML=data.map(function(r,i){
  var c=r.split('|'),k=[];
  if(i%5==1||i%5==4)k.push('tall');
  if(c[0]=='5231')k.push('cur');
  if(c[0]=='5004')k.push('over');
  return '<tr class="'+k.join(' ')+'"><td class="tick"><input type="checkbox" class="tag" aria-label="Tag '+c[1]+'"'+(c[0]=='141'?'':' checked')+'></td><td class="num">'+c[0]+'</td><td>'+c[1]+'</td><td class="num">'+c[2]+'</td><td class="tel">'+c[3]+'</td><td class="tel">'+c[4]+'</td><td class="tel">'+c[5]+'</td><td>'+c[6]+'</td><td></td></tr>';
}).join('');
document.getElementById('view').scrollTop=12;
</script>
</body>
</html>
